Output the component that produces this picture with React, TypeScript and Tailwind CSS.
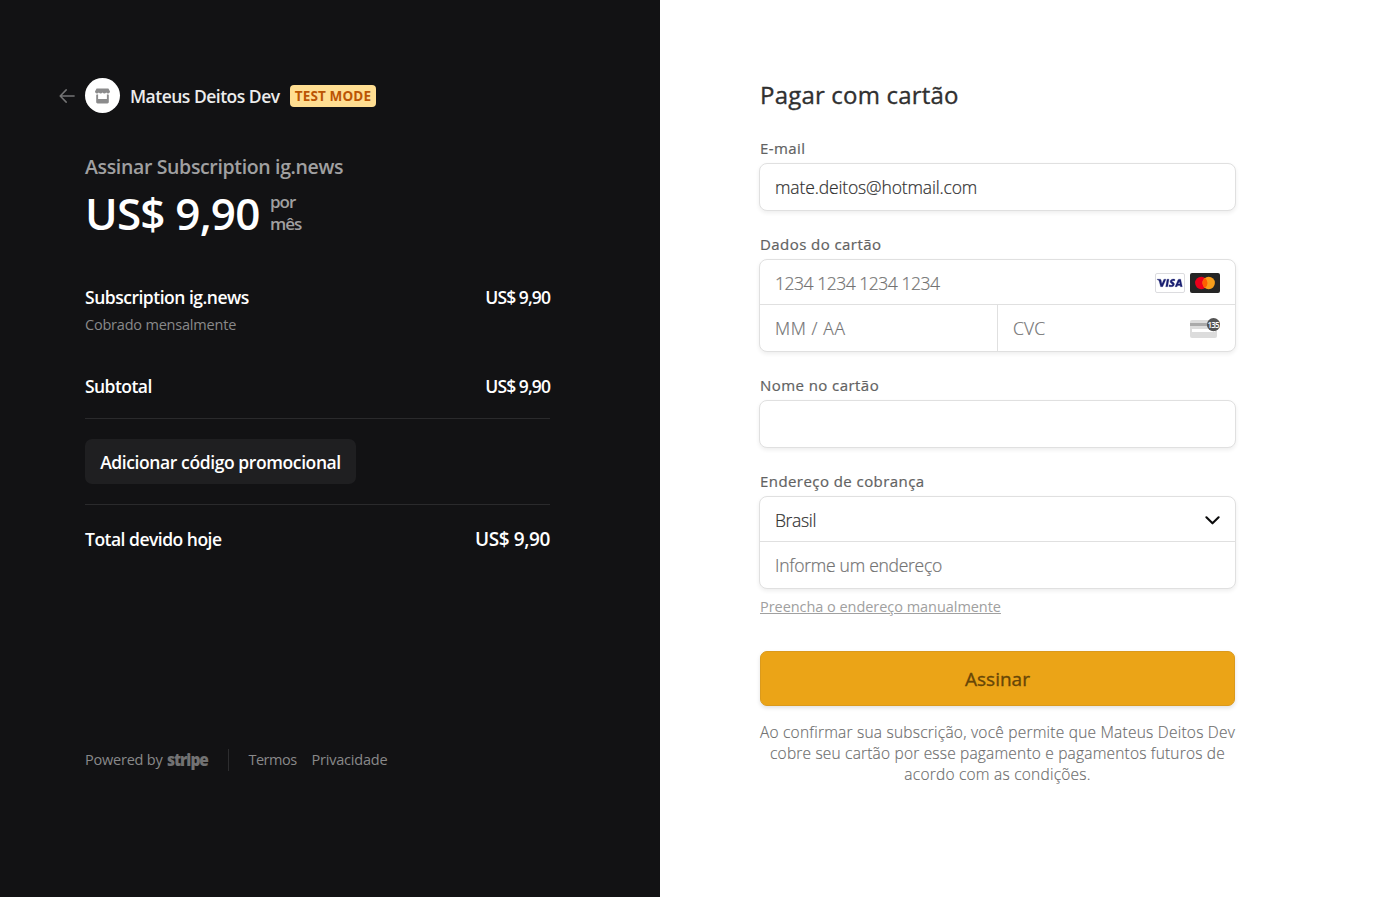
import type { ReactNode } from "react";

function BackArrow() {
  return (
    <svg width="16" height="14" viewBox="0 0 16 14" fill="none" stroke="#737374" strokeWidth="1.5" strokeLinecap="round" strokeLinejoin="round">
      <path d="M7.2 0.9 1.2 7l6 6.1M1.4 7h13.7" />
    </svg>
  );
}

function ShopIcon() {
  return (
    <svg width="15" height="16" viewBox="0 0 15 16" fill="#8b8b8c">
      <path d="M1.6.5h11.8L15 3.6c0 1.1-.8 1.9-1.9 1.9-.8 0-1.5-.4-1.9-1-.4.6-1 1-1.8 1-.8 0-1.5-.4-1.9-1-.4.6-1 1-1.8 1-.8 0-1.5-.4-1.9-1-.4.6-1 1-1.900 1C.8 5.500 0 4.700 0 3.600z" />
      <path d="M1.200 6.600c.7.100 1.400-.1 1.900-.4v4.900h8.800V6.200c.6.300 1.200.5 1.900.4v7.500c0 .8-.6 1.400-1.400 1.400H2.600c-.8 0-1.400-.6-1.400-1.400z" />
    </svg>
  );
}

function VisaIcon() {
  return (
    <svg width="30" height="20" viewBox="0 0 30 20">
      <rect x=".5" y=".5" width="29" height="19" rx="1.500" fill="#fff" stroke="#dcdcdf" />
      <g fill="#1a1f71" stroke="#1a1f71" strokeWidth=".25">
        <path d="M2 6.200h3.200c.5 0 .8.200.9.700l.8 3.900 2-4.600h2.100L7.700 13.700H5.600L4 7.700C3.500 7.100 2.800 6.700 2 6.500z" />
        <path d="M12 6.200h2l-1.300 7.500h-2z" />
        <path d="M20 6.400 19.700 8c-.6-.3-2.500-.7-2.600.2 0 .8 2.500 1 2.400 3-.1 2.100-2.600 3.100-5.600 2.300l.3-1.700c1 .6 3 .7 3.200-.2.100-.9-2.400-1-2.300-3C15.200 6.400 17.700 5.500 20 6.400z" />
        <path fillRule="evenodd" d="M24 6.200h1.700l1.600 7.500h-1.900l-.2-1.200h-2.600l-.5 1.200h-2.100l3-6.900c.2-.4.500-.6 1-.6zm.3 2.200L23.200 11h1.700z" />
      </g>
    </svg>
  );
}

function MastercardIcon() {
  return (
    <svg width="30" height="20" viewBox="0 0 30 20">
      <rect width="30" height="20" rx="2" fill="#252525" />
      <circle cx="11.300" cy="10" r="6.200" fill="#eb001b" />
      <circle cx="18.700" cy="10" r="6.200" fill="#f79e1b" />
      <path d="M15 5.020a6.200 6.200 0 0 1 0 9.960 6.200 6.200 0 0 1 0-9.960z" fill="#ff5f00" />
    </svg>
  );
}

function CvcIcon() {
  return (
    <svg width="30" height="20" viewBox="0 0 30 20">
      <rect y="2" width="27" height="18" rx="2" fill="#dcdcdc" />
      <rect y="5" width="27" height="3" fill="#aaa" />
      <rect x="2" y="11" width="23" height="3" fill="#fff" />
      <circle cx="23.500" cy="6.700" r="6.600" fill="#545454" />
      <text x="23.100" y="9.600" textAnchor="middle" fontFamily="Open Sans, sans-serif" fontSize="8" fontWeight="600" letterSpacing="-.8" fill="#fff" stroke="none" style={{ WebkitTextStroke: 0 }}>135</text>
    </svg>
  );
}

function Chevron() {
  return (
    <svg width="15" height="9" viewBox="0 0 15 9" fill="none" stroke="#0b0b0c" strokeWidth="2.100" strokeLinecap="round" strokeLinejoin="round">
      <path d="M1.400 1.300 7.500 7.300l6.100-6" />
    </svg>
  );
}

function StripeLogo() {
  return <span className="block origin-left scale-x-[0.86] pb-[2px] text-[18px] font-extrabold tracking-[-0.065em] text-[#727273]">stripe</span>;
}

const box = "-mx-px rounded-[8px] border border-[#e0e0e0] bg-white shadow-[0_2px_4px_rgba(0,0,0,0.07)]";

function Label({ children }: { children: ReactNode }) {
  return <div className="flex h-[30px] items-center text-[15px] tracking-[0.029em] text-[#626262] [-webkit-text-stroke:0.2px_#626262]">{children}</div>;
}

function Summary() {
  return (
    <section className="w-[660px] bg-[#121214] pt-[78px] pl-[59px] text-white">
      <header className="flex h-[35px] items-center">
        <BackArrow />
        <div className="ml-[10px] flex size-[35px] items-center justify-center rounded-full bg-white">
          <ShopIcon />
        </div>
        <span className="ml-[10px] w-[150px] whitespace-nowrap pt-[2px] text-[17.5px] font-semibold tracking-[-0.029em] text-[#ececec]">Mateus Deitos Dev</span>
        <span className="ml-[10px] mt-[1px] flex h-[22px] w-[86px] items-center justify-center rounded-[4px] bg-[#ffde92] pt-px text-[13.5px] font-bold tracking-[0.01em] whitespace-nowrap text-[#bb5504]">TEST MODE</span>
      </header>

      <div className="ml-[26px] w-[465px]">
        <h1 className="mt-[39px] h-[30px] text-[19.5px] leading-[30px] font-semibold tracking-[-0.018em] text-[#a0a0a1]">Assinar Subscription ig.news</h1>
        <div className="flex h-[62px] items-center">
          <span className="w-[185px] whitespace-nowrap text-[44px] font-semibold tracking-[-0.018em]">US$ 9,90</span>
          <span className="text-[17px] leading-[22px] font-semibold tracking-[-0.06em] text-[#a0a0a1]">por<br />mês</span>
        </div>
        <div className="mt-[40px] flex h-[26px] items-center justify-between text-[17.5px] font-semibold">
          <span className="tracking-[-0.028em]">Subscription ig.news</span>
          <span className="tracking-[-0.052em]">US$ 9,90</span>
        </div>
        <div className="mt-px flex h-[28px] items-center text-[14.5px] tracking-[-0.014em] text-[#89898a]">Cobrado mensalmente</div>
        <div className="mt-[33px] flex h-[28px] items-center justify-between text-[17.5px] font-semibold">
          <span className="tracking-[-0.032em]">Subtotal</span>
          <span className="tracking-[-0.052em]">US$ 9,90</span>
        </div>
        <div className="mt-[18px] border-y border-[#2a2a2c] py-[20px]">
          <button className="flex h-[45px] w-[271px] items-center justify-center rounded-[7px] bg-[#1f1f21] pt-[2px] text-[17.5px] font-semibold tracking-[-0.023em] whitespace-nowrap">Adicionar código promocional</button>
        </div>
        <div className="mt-[20px] flex h-[28px] items-center justify-between font-semibold">
          <span className="text-[17.5px] tracking-[-0.029em]">Total devido hoje</span>
          <span className="text-[19px] tracking-[-0.02em]">US$ 9,90</span>
        </div>
        <footer className="mt-[195px] flex h-[24px] items-center text-[14.5px] text-[#89898a]">
          <span className="whitespace-nowrap tracking-[-0.015em]">Powered by</span>
          <span className="ml-[4px] w-[42px]"><StripeLogo /></span>
          <span className="mr-[20px] ml-[19px] h-[22px] w-px bg-[#2d2d2f]" />
          <span className="w-[47px] whitespace-nowrap tracking-[-0.035em]">Termos</span>
          <span className="ml-[16px] tracking-[-0.014em]">Privacidade</span>
        </footer>
      </div>
    </section>
  );
}

const field = "text-[17.5px] font-light [-webkit-text-stroke:0.2px_#303030]";
const placeholder = "text-[17.5px] font-light text-[#727272] [-webkit-text-stroke:0.2px_#727272]";

function Payment() {
  return (
    <section className="flex-1 bg-white pt-[78px] pl-[100px] text-[#303030]">
      <div className="w-[475px]">
        <h2 className="h-[34px] text-[24px] leading-[34px] tracking-[0.008em] [-webkit-text-stroke:0.35px_#303030]">Pagar com cartão</h2>
        <div className="mt-[21px]">
          <Label>E-mail</Label>
          <div className={box}>
            <div className={`flex h-[46px] items-center px-[15px] pt-px tracking-[-0.008em] ${field}`}>mate.deitos@hotmail.com</div>
          </div>
        </div>
        <div className="mt-[18px]">
          <Label>Dados do cartão</Label>
          <div className={box}>
            <div className={`flex h-[45px] items-center border-b border-[#e0e0e0] px-[15px] pt-[2px] ${placeholder}`}>
              <span className="flex-1 tracking-[-0.027em]">1234 1234 1234 1234</span>
              <div className="flex gap-[5px]"><VisaIcon /><MastercardIcon /></div>
            </div>
            <div className={`flex h-[46px] ${placeholder}`}>
              <div className="flex w-[238px] items-center border-r border-[#e0e0e0] pl-[15px] tracking-[0.035em]">MM / AA</div>
              <div className="flex flex-1 items-center justify-between pr-[15px] pl-[15px] tracking-[0.01em]"><span>CVC</span><CvcIcon /></div>
            </div>
          </div>
        </div>
        <div className="mt-[18px]">
          <Label>Nome no cartão</Label>
          <div className={box}><div className="h-[46px]" /></div>
        </div>
        <div className="mt-[18px]">
          <Label>Endereço de cobrança</Label>
          <div className={box}>
            <div className={`flex h-[45px] items-center justify-between border-b border-[#e0e0e0] px-[15px] pt-[2px] tracking-[-0.02em] ${field}`}>
              <span>Brasil</span><Chevron />
            </div>
            <div className={`flex h-[46px] items-center px-[15px] pt-px tracking-[-0.015em] ${placeholder}`}>Informe um endereço</div>
          </div>
          <div className="mt-[6px] flex h-[24px] items-center text-[14.5px] tracking-[-0.003em] text-[#a0a0a0] underline">Preencha o endereço manualmente</div>
        </div>
        <button className="mt-[32px] flex h-[55px] w-full items-center justify-center rounded-[7px] border border-[#db9a1c] bg-[#eba417] pt-[2px] text-[19px] text-[#674607] shadow-[0_2px_4px_rgba(0,0,0,0.12)] [-webkit-text-stroke:0.35px_#674607]">Assinar</button>
        <div className="mt-[16px] flex flex-col items-center text-[15.5px] leading-[21px] font-light tracking-[0.0145em] whitespace-nowrap text-[#6c6c6c] [-webkit-text-stroke:0.15px_#6c6c6c]">
          <span>Ao confirmar sua subscrição, você permite que Mateus Deitos Dev</span>
          <span className="tracking-[0.012em]">cobre seu cartão por esse pagamento e pagamentos futuros de</span>
          <span>acordo com as condições.</span>
        </div>
      </div>
    </section>
  );
}

export default function App() {
  return (
    <main className="flex h-[897px] w-[1373px] overflow-hidden font-['Open_Sans',sans-serif]">
      <Summary />
      <Payment />
    </main>
  );
}
